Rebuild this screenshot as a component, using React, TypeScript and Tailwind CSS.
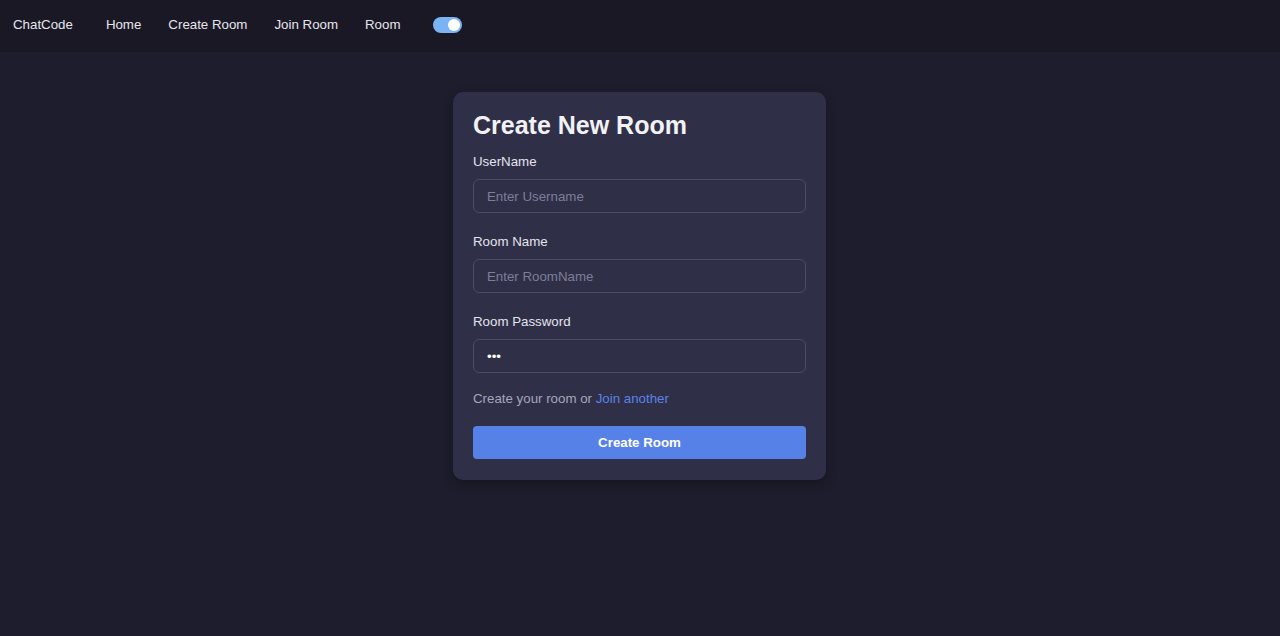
import { useState } from "react";

function Field({ label, placeholder, type = "text", value }: { label: string; placeholder: string; type?: string; value?: string }) {
  return (
    <div className="flex flex-col">
      <label className="text-[13.3px] leading-[16px] text-[#e4e4ee] mb-[9px]">{label}</label>
      <input
        type={type}
        defaultValue={value}
        placeholder={placeholder}
        className="h-[34px] w-full rounded-[6px] border border-[#4a4b66] bg-[#2f3048] px-[13px] text-[13.3px] text-white placeholder:text-[#7d7e97] outline-none"
      />
    </div>
  );
}

export default function App() {
  const [dark, setDark] = useState(true);

  return (
    <div className="min-h-[636px] bg-[#1e1d2d] font-['Liberation_Sans',Arial,sans-serif]">
      <nav className="flex h-[52px] items-center bg-[#1a1824] px-[13px] pb-[3px] text-[13.3px] text-[#e6e6ee]">
        <span>ChatCode</span>
        <div className="ml-[33px] flex items-center gap-[27px]">
          <a href="#">Home</a>
          <a href="#">Create Room</a>
          <a href="#">Join Room</a>
          <a href="#">Room</a>
        </div>
        <button
          onClick={() => setDark(!dark)}
          className="ml-[33px] flex h-[16px] w-[29px] items-center rounded-full bg-[#7cb3f4] px-[2px] justify-end"
        >
          <span className="h-[12px] w-[12px] rounded-full bg-white" />
        </button>
      </nav>

      <main className="flex justify-center pt-[40px] pr-[1px]">
        <div className="w-[373px] rounded-[10px] bg-[#2f3048] px-[20px] pt-[20px] pb-[21px] shadow-[0_4px_12px_rgba(0,0,0,0.3)]">
          <h1 className="text-[25px] font-bold leading-[30px] text-[#f1f1f6] mb-[14px] mt-[-2px]">Create New Room</h1>
          <div className="flex flex-col gap-[21px]">
            <Field label="UserName" placeholder="Enter Username" />
            <Field label="Room Name" placeholder="Enter RoomName" />
            <Field label="Room Password" placeholder="Enter Password" type="password" value="abc" />
          </div>
          <p className="mt-[18px] text-[13.3px] leading-[16px] text-[#a5a6bb]">
            Create your room or <a href="#" className="text-[#5b82e6]">Join another</a>
          </p>
          <button className="mt-[19px] h-[33px] w-full rounded-[4px] bg-[#5682e8] text-[13.3px] font-bold text-white">
            Create Room
          </button>
        </div>
      </main>
    </div>
  );
}
